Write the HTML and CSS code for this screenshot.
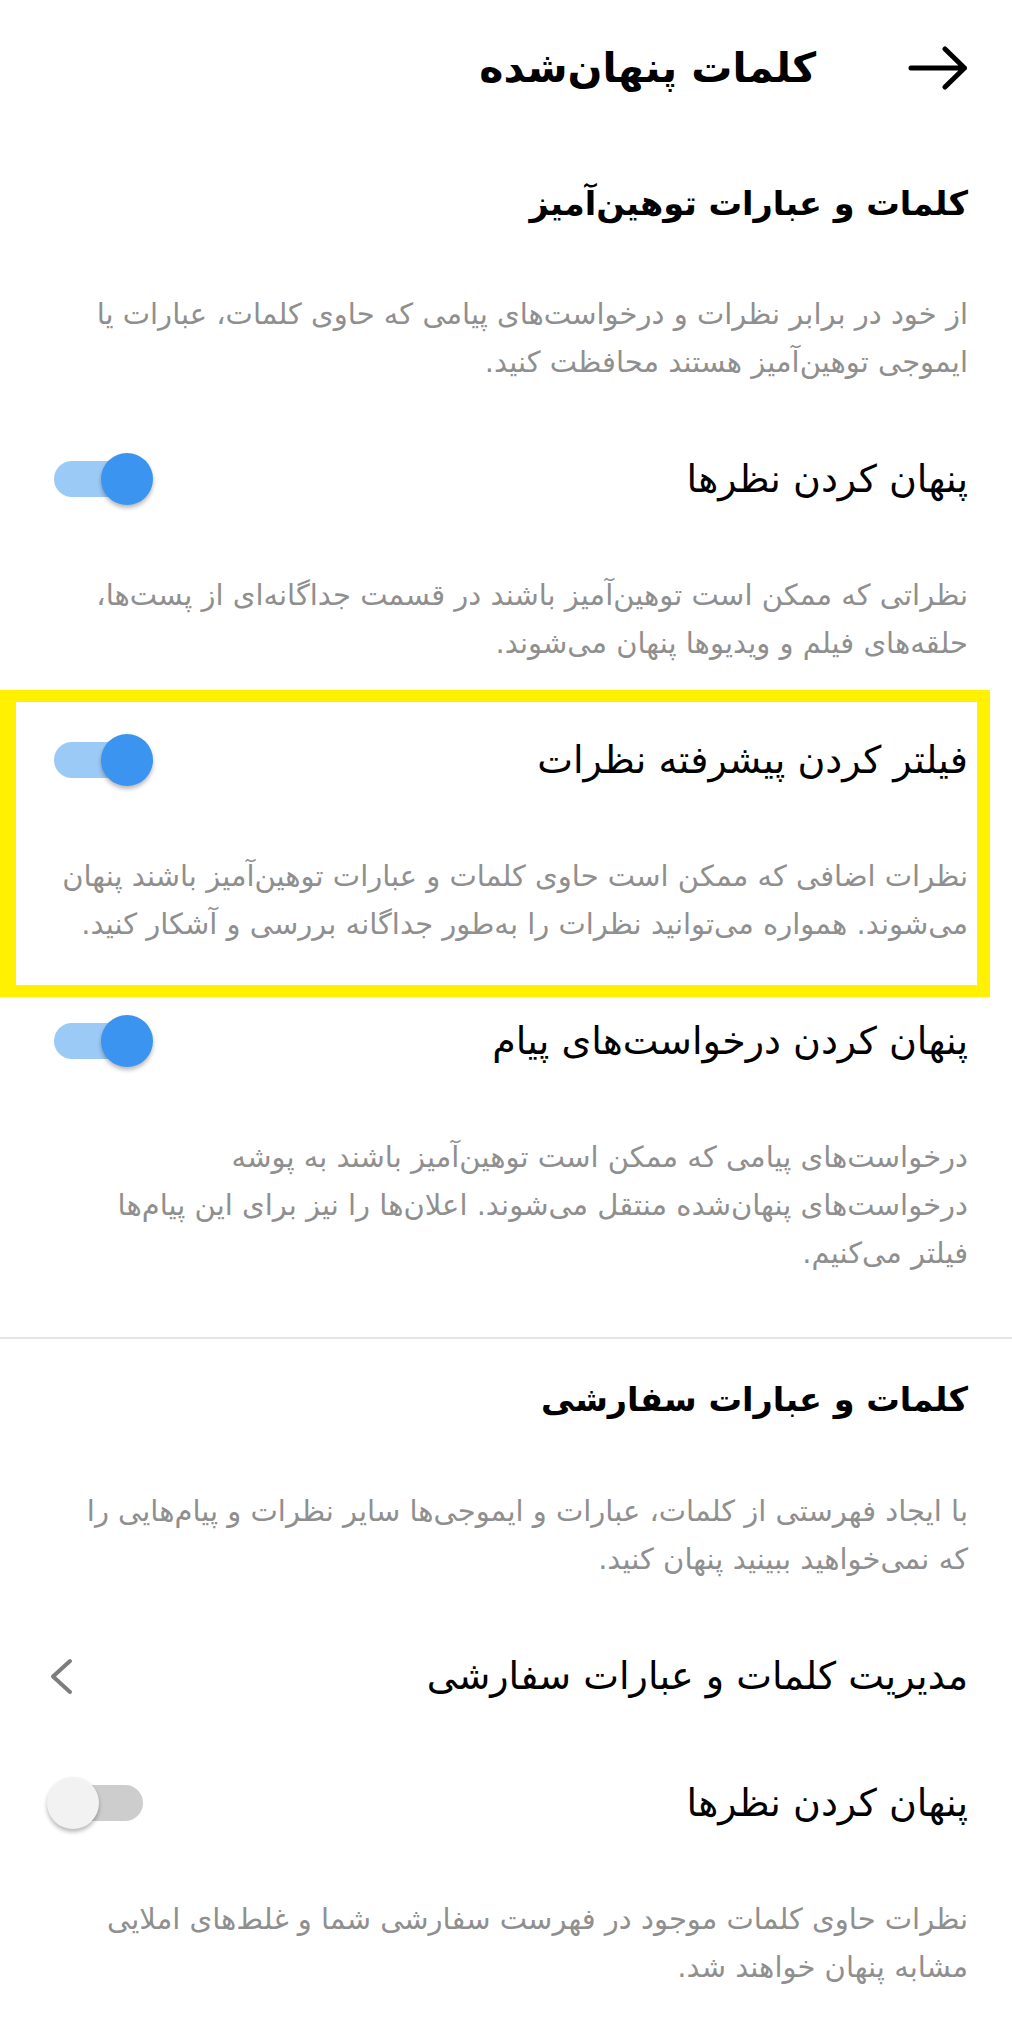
FILE: index.html
```html
<!DOCTYPE html>
<html lang="fa" dir="rtl">
<head>
<meta charset="utf-8">
<title>کلمات پنهان‌شده</title>
<link rel="stylesheet" href="styles.css">
</head>
<body>
<div class="page">
  <header class="topbar">
    <svg class="back" viewBox="0 0 60 44" aria-hidden="true">
      <path d="M3 22 H56.5 M37 3 L56.5 22 L37 41" fill="none" stroke="#000" stroke-width="5" stroke-linecap="round" stroke-linejoin="round"/>
    </svg>
    <h1 class="title">کلمات پنهان‌شده</h1>
  </header>

  <h2 class="section-title first">کلمات و عبارات توهین‌آمیز</h2>
  <p class="desc">از خود در برابر نظرات و درخواست‌های پیامی که حاوی کلمات، عبارات یا<br>ایموجی توهین‌آمیز هستند محافظت کنید.</p>

  <div class="row">
    <span class="label">پنهان کردن نظرها</span>
    <span class="switch on"><span class="track"></span><span class="knob"></span></span>
  </div>
  <p class="desc">نظراتی که ممکن است توهین‌آمیز باشند در قسمت جداگانه‌ای از پست‌ها،<br>حلقه‌های فیلم و ویدیوها پنهان می‌شوند.</p>

  <div class="highlight">
    <div class="row">
      <span class="label">فیلتر کردن پیشرفته نظرات</span>
      <span class="switch on"><span class="track"></span><span class="knob"></span></span>
    </div>
    <p class="desc">نظرات اضافی که ممکن است حاوی کلمات و عبارات توهین‌آمیز باشند پنهان<br>می‌شوند. همواره می‌توانید نظرات را به‌طور جداگانه بررسی و آشکار کنید.</p>
  </div>

  <div class="row">
    <span class="label">پنهان کردن درخواست‌های پیام</span>
    <span class="switch on"><span class="track"></span><span class="knob"></span></span>
  </div>
  <p class="desc">درخواست‌های پیامی که ممکن است توهین‌آمیز باشند به پوشه<br>درخواست‌های پنهان‌شده منتقل می‌شوند. اعلان‌ها را نیز برای این پیام‌ها<br>فیلتر می‌کنیم.</p>

  <hr class="divider">

  <h2 class="section-title">کلمات و عبارات سفارشی</h2>
  <p class="desc">با ایجاد فهرستی از کلمات، عبارات و ایموجی‌ها سایر نظرات و پیام‌هایی را<br>که نمی‌خواهید ببینید پنهان کنید.</p>

  <div class="row row-link">
    <span class="label">مدیریت کلمات و عبارات سفارشی</span>
    <svg class="chevron" viewBox="0 0 24 40" aria-hidden="true">
      <path d="M20 5 L3 20.5 L20 36" fill="none" stroke="#7d7d7d" stroke-width="4" stroke-linecap="round" stroke-linejoin="round"/>
    </svg>
  </div>

  <div class="row">
    <span class="label">پنهان کردن نظرها</span>
    <span class="switch off"><span class="track"></span><span class="knob"></span></span>
  </div>
  <p class="desc">نظرات حاوی کلمات موجود در فهرست سفارشی شما و غلط‌های املایی<br>مشابه پنهان خواهند شد.</p>
</div>
</body>
</html>
```

FILE: styles.css
```css
* {
  box-sizing: border-box;
  margin: 0;
  padding: 0;
}

html, body {
  background: #ffffff;
}

body {
  margin: 0;
  font-family: "DejaVu Sans", sans-serif;
  color: #000000;
}

.page {
  direction: rtl;
  width: 1012px;
  padding: 0 44px;
}

.topbar {
  height: 136px;
  display: flex;
  align-items: center;
  gap: 92px;
}

.back {
  width: 60px;
  height: 44px;
  flex: none;
}

.title {
  font-size: 41px;
  font-weight: bold;
  line-height: 56px;
}

.section-title {
  font-size: 33.5px;
  font-weight: bold;
  line-height: 56px;
  height: 56px;
  margin: 33px 0 19px;
}

.section-title.first {
  margin-top: 40px;
  margin-bottom: 18px;
}

.desc {
  font-size: 29px;
  line-height: 48px;
  color: #8f8f8f;
  padding: 40px 0 41px;
  white-space: nowrap;
}

.row {
  height: 104px;
  display: flex;
  align-items: center;
  justify-content: space-between;
}

.row-link {
  margin-bottom: 23px;
}

.label {
  font-size: 38px;
  line-height: 52px;
  color: #000000;
  white-space: nowrap;
}

.switch {
  position: relative;
  flex: none;
  width: 106px;
  height: 52px;
  margin-left: 3px;
}

.track {
  position: absolute;
  left: 7px;
  top: 8px;
  width: 89px;
  height: 36px;
  border-radius: 18px;
}

.knob {
  position: absolute;
  top: 0;
  width: 52px;
  height: 52px;
  border-radius: 50%;
  box-shadow: 0 3px 4px rgba(0, 0, 0, 0.28);
}

.switch.on .track {
  background: #9ccaf6;
}

.switch.on .knob {
  left: 54px;
  background: #3b94ef;
}

.switch.off .track {
  background: #cdcdcd;
}

.switch.off .knob {
  left: 0;
  background: #f2f2f2;
}

.chevron {
  flex: none;
  width: 24px;
  height: 40px;
  margin-left: 6px;
}

.highlight {
  margin: -18px -22px -8px -44px;
  border: 12px solid #fff100;
  border-left-width: 16px;
  border-right-width: 13px;
  padding: 6px 9px 0 28px;
}

.highlight .desc {
  padding-bottom: 37px;
}

.divider {
  border: none;
  height: 2px;
  background: #e5e5e5;
  margin: 19px -44px 0;
}
```
